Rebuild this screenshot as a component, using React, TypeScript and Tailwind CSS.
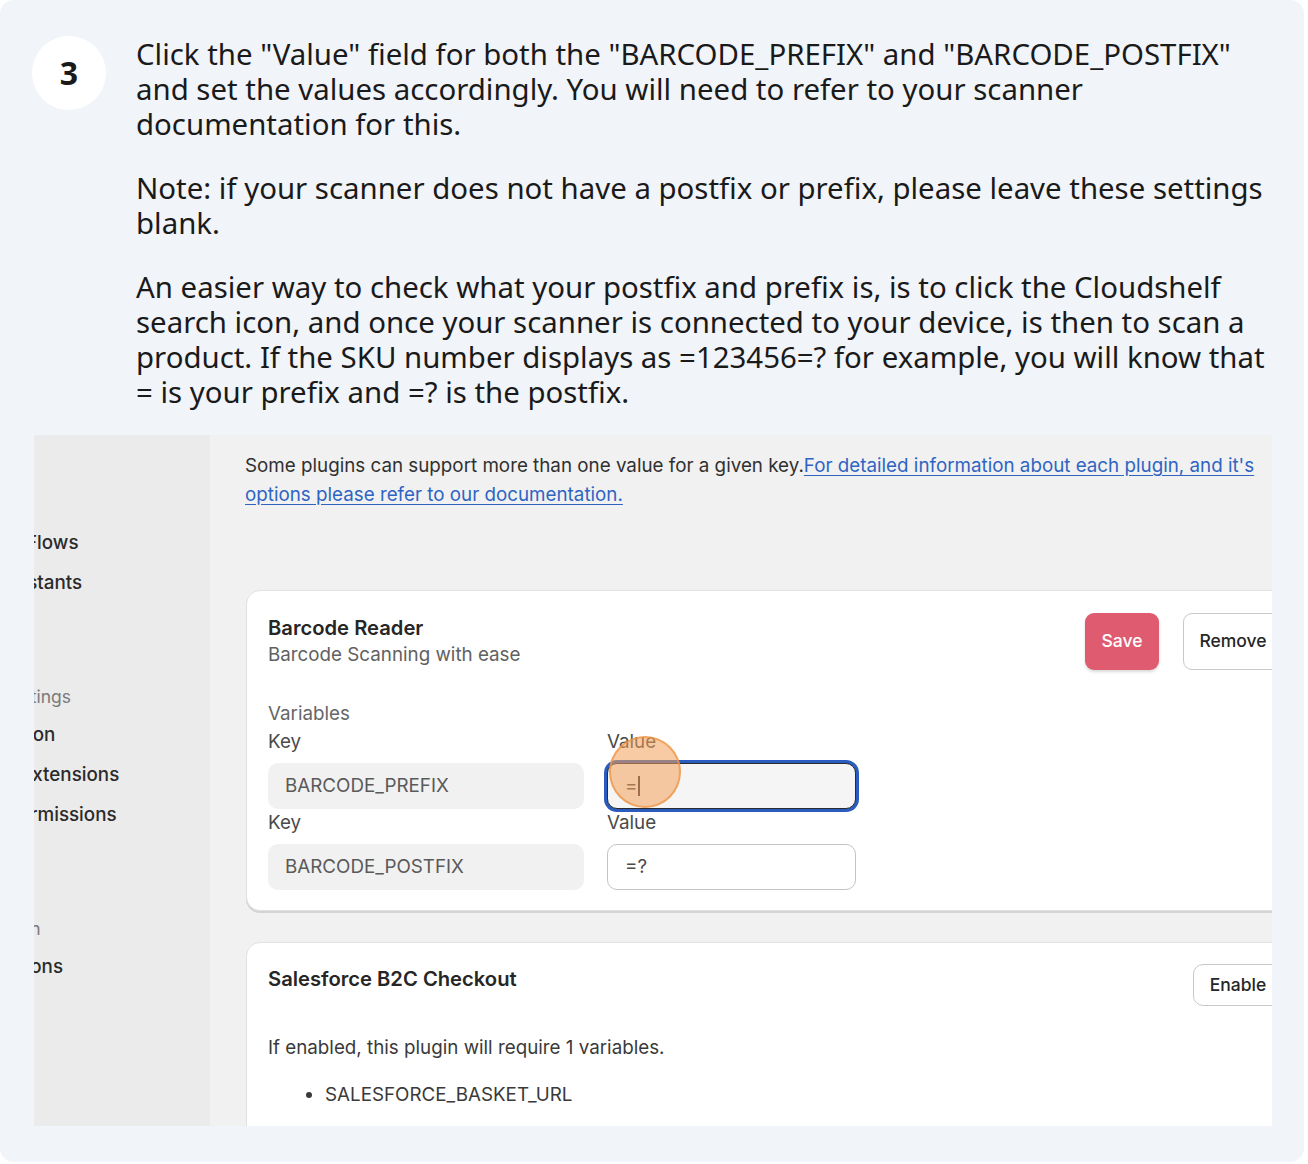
import React from "react";

function SideItem({ text, shift, top, muted }: { text: string; shift: string; top: string; muted?: boolean }) {
  return (
    <div className={`${top} ${shift} whitespace-nowrap ${muted ? "text-[17.5px] text-[#7a7a7a] font-normal" : "text-[18.8px] text-[#2a2a2a] font-medium"} leading-[24px]`}>
      {text}
    </div>
  );
}

export default function App() {
  return (
    <div className="w-[1308px] h-[1164px] bg-white">
      <div className="w-[1304px] h-[1162px] bg-[#f1f4f9] rounded-[14px] overflow-hidden relative">
        {/* step header */}
        <div className="flex pt-[36px] pl-[32px]">
          <div className="w-[74px] h-[74px] rounded-full bg-white flex items-center justify-center shrink-0">
            <span className="text-[32px] font-bold text-[#1a1a1a]" style={{ fontFamily: '"Noto Sans", sans-serif' }}>3</span>
          </div>
          <div
            className="ml-[30px] mt-[1px] w-[1136px] text-[29.4px] leading-[35px] text-[#1a1a1a]"
            style={{ fontFamily: '"Noto Sans", sans-serif' }}
          >
            <p>
              Click the "Value" field for both the "BARCODE_PREFIX" and "BARCODE_POSTFIX" and set the values accordingly. You will need to refer to your scanner documentation for this.
            </p>
            <p className="mt-[29px]">
              Note: if your scanner does not have a postfix or prefix, please leave these settings blank.
            </p>
            <p className="mt-[29px]">
              An easier way to check what your postfix and prefix is, is to click the Cloudshelf search icon, and once your scanner is connected to your device, is then to scan a product. If the SKU number displays as =123456=? for example, you will know that = is your prefix and =? is the postfix.
            </p>
          </div>
        </div>

        {/* screenshot */}
        <div
          className="absolute left-[34px] top-[435px] w-[1238px] h-[691px] flex overflow-hidden"
          style={{ fontFamily: 'Inter, "Liberation Sans", sans-serif' }}
        >
          {/* sidebar */}
          <div className="w-[176px] shrink-0 bg-[#ebebeb] overflow-hidden flex flex-col">
            <SideItem text="Flows" shift="ml-[-8px]" top="mt-[96px]" />
            <SideItem text="Assistants" shift="ml-[-45px]" top="mt-[16px]" />
            <SideItem text="Settings" shift="ml-[-30px]" top="mt-[90px]" muted />
            <SideItem text="Location" shift="ml-[-56px]" top="mt-[14px]" />
            <SideItem text="Extensions" shift="ml-[-13px]" top="mt-[16px]" />
            <SideItem text="Permissions" shift="ml-[-27px]" top="mt-[16px]" />
            <SideItem text="Plan" shift="ml-[-29px]" top="mt-[90px]" muted />
            <SideItem text="Integrations" shift="ml-[-78px]" top="mt-[14px]" />
          </div>

          {/* main */}
          <div className="flex-1 bg-[#f1f1f1] overflow-hidden pl-[35px] pt-[16px]">
            <p className="text-[18.8px] leading-[29px] text-[#303030] w-[1020px]">
              Some plugins can support more than one value for a given key.
              <a className="text-[#2f64c3] underline underline-offset-[3px]">
                For detailed information about each plugin, and it's options please refer to our documentation.
              </a>
            </p>

            {/* card 1 */}
            <div className="mt-[81px] ml-[1px] w-[1060px] bg-white rounded-[14px] border border-[#e0e0e0] shadow-[0_2px_0_#d4d4d4] pl-[21px] pr-[22px] pt-[22px] pb-[20px]">
              <div className="flex justify-between">
                <div className="pt-[3px]">
                  <div className="text-[20.2px] leading-[24px] font-semibold text-[#262626]">Barcode Reader</div>
                  <div className="text-[18.8px] leading-[28px] text-[#616161] mt-[1px]">Barcode Scanning with ease</div>
                </div>
                <div className="flex gap-[24px]">
                  <button className="w-[74px] h-[57px] rounded-[9px] bg-[#df5b6f] text-white text-[17.5px] font-medium shadow-[0_2px_3px_rgba(0,0,0,0.15)]">
                    Save
                  </button>
                  <button className="w-[100px] h-[57px] rounded-[9px] bg-white border border-[#c9c9c9] text-[#262626] text-[17.5px] font-medium">
                    Remove
                  </button>
                </div>
              </div>

              <div className="mt-[32px] text-[18.8px] leading-[24px] text-[#666]">Variables</div>

              <div className="flex gap-[23px] mt-[4px]">
                <div className="w-[316px]">
                  <div className="text-[18.8px] leading-[24px] text-[#4a4a4a]">Key</div>
                  <div className="mt-[9px] h-[46px] rounded-[10px] bg-[#f1f1f1] flex items-center pl-[17px] text-[18.8px] text-[#5a5a5a]">
                    BARCODE_PREFIX
                  </div>
                  <div className="mt-[2px] text-[18.8px] leading-[24px] text-[#4a4a4a]">Key</div>
                  <div className="mt-[9px] h-[46px] rounded-[10px] bg-[#f1f1f1] flex items-center pl-[17px] text-[18.8px] text-[#5a5a5a]">
                    BARCODE_POSTFIX
                  </div>
                </div>
                <div className="w-[249px] relative">
                  <div className="text-[18.8px] leading-[24px] text-[#4a4a4a]">Value</div>
                  <div className="mt-[9px] h-[46px] rounded-[10px] bg-[#f5f5f5] border-[1.5px] border-[#2b2b2b] ring-[3px] ring-[#2a5bbf] flex items-center pl-[17px] text-[18.8px] text-[#4a4a4a]">
                    =<span className="inline-block w-[1.5px] h-[20px] bg-[#333] ml-[1px]" />
                  </div>
                  <div className="mt-[2px] text-[18.8px] leading-[24px] text-[#4a4a4a]">Value</div>
                  <div className="mt-[9px] h-[46px] rounded-[10px] bg-white border border-[#c4c4c4] flex items-center pl-[17px] text-[18.8px] text-[#4a4a4a]">
                    =?
                  </div>
                  {/* click indicator */}
                  <div className="absolute left-[2px] top-[6px] w-[72px] h-[72px] rounded-full bg-[rgba(243,160,90,0.55)] border-[2px] border-[rgba(236,150,70,0.75)]" />
                </div>
              </div>
            </div>

            {/* card 2 */}
            <div className="mt-[31px] ml-[1px] w-[1060px] h-[260px] bg-white rounded-[14px] border border-[#e0e0e0] pl-[21px] pr-[22px] pt-[21px]">
              <div className="flex justify-between">
                <div className="text-[20.2px] leading-[24px] font-semibold text-[#262626] pt-[3px]">Salesforce B2C Checkout</div>
                <button className="w-[90px] h-[42px] rounded-[10px] bg-white border border-[#c9c9c9] text-[#262626] text-[17.5px] font-medium">
                  Enable
                </button>
              </div>
              <div className="mt-[28px] text-[18.8px] leading-[28px] text-[#3a3a3a]">If enabled, this plugin will require 1 variables.</div>
              <ul className="mt-[19px] pl-[57px] list-disc text-[18.8px] leading-[28px] text-[#3a3a3a]">
                <li>SALESFORCE_BASKET_URL</li>
              </ul>
            </div>
          </div>
        </div>
      </div>
    </div>
  );
}
